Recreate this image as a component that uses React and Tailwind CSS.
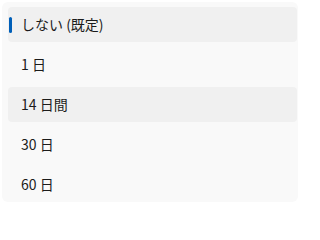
import React from "react";

const options = [
  { label: "しない (既定)", selected: true },
  { label: "1 日" },
  { label: "14 日間", hover: true },
  { label: "30 日" },
  { label: "60 日" },
];

export default function App() {
  return (
    <div className="w-[300px] h-[204px] bg-white p-[2px] overflow-hidden">
      <div
        className="h-[200px] w-[296px] bg-[#f9f9f9] rounded-[6px] overflow-hidden pt-[5px] pl-[6px] pr-[1px] flex flex-col gap-[5px]"
        style={{ fontFamily: '"Noto Sans CJK JP", "Noto Sans", sans-serif' }}
      >
        {options.map((o) => (
          <div
            key={o.label}
            className={`relative shrink-0 h-[35px] rounded-[4px] flex items-center pl-[13px] text-[14px] text-[#1b1b1b] ${
              o.selected || o.hover ? "bg-[#f0f0f0]" : ""
            }`}
          >
            {o.selected && (
              <span className="absolute left-[1px] top-[10px] w-[3px] h-[16px] rounded-full bg-[#005fb8]" />
            )}
            {o.label}
          </div>
        ))}
      </div>
    </div>
  );
}
